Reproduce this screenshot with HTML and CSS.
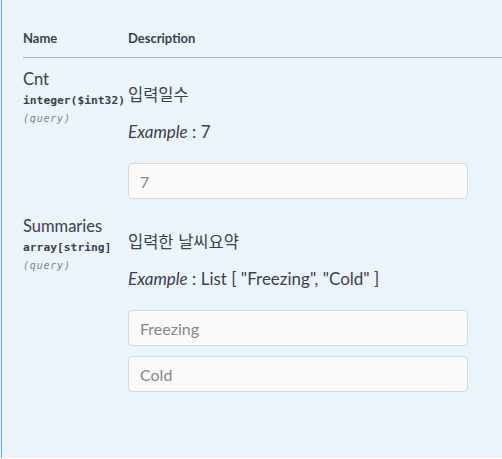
FILE: index.html
```html
<!DOCTYPE html>
<html lang="ko">
<head>
<meta charset="utf-8">
<title>Parameters</title>
<link rel="stylesheet" href="styles.css">
</head>
<body>
<div class="panel">
  <div class="params">
    <div class="head">
      <div class="col-name">Name</div>
      <div class="col-desc">Description</div>
    </div>
    <div class="param">
      <div class="col-name">
        <div class="pname">Cnt</div>
        <div class="ptype">integer($int32)</div>
        <div class="pin">(query)</div>
      </div>
      <div class="col-desc">
        <p class="desc">입력일수</p>
        <p class="example"><i>Example</i> : 7</p>
        <input class="field" type="text" placeholder="7">
      </div>
    </div>
    <div class="param">
      <div class="col-name">
        <div class="pname">Summaries</div>
        <div class="ptype">array[string]</div>
        <div class="pin">(query)</div>
      </div>
      <div class="col-desc">
        <p class="desc">입력한 날씨요약</p>
        <p class="example"><i>Example</i> : List [ "Freezing", "Cold" ]</p>
        <input class="field" type="text" placeholder="Freezing">
        <input class="field" type="text" placeholder="Cold">
      </div>
    </div>
  </div>
</div>
</body>
</html>
```
FILE: styles.css
```css
html {
  background: #ffffff;
}
body {
  margin: 0;
  background: #ebf3fb;
  color: #3b4151;
  font-family: Lato, "Noto Sans CJK KR", sans-serif;
}
.panel {
  margin-left: 1px;
  height: 458px;
  box-sizing: border-box;
  border-left: 1px solid #61affe;
  padding: 30px 0 0 21px;
}
.head {
  display: flex;
  font-size: 13px;
  font-weight: 700;
  line-height: 16px;
  padding-bottom: 11px;
  border-bottom: 1px solid #aeb4bf;
}
.col-name {
  width: 105px;
  flex: none;
}
.col-desc {
  flex: 1;
  display: flex;
  flex-direction: column;
  align-items: flex-start;
}
.param {
  display: flex;
  padding-top: 11px;
}
.pname {
  font-size: 16.5px;
  line-height: 20px;
}
.ptype {
  margin-top: 3px;
  font-family: "DejaVu Sans Mono", monospace;
  font-weight: 700;
  font-size: 11.3px;
  line-height: 18px;
  white-space: nowrap;
}
.pin {
  font-family: "DejaVu Sans Mono", monospace;
  font-style: italic;
  font-size: 10px;
  letter-spacing: 0.8px;
  line-height: 18px;
  color: #858585;
}
.desc {
  margin: 14px 0 0;
  font-family: "Noto Sans CJK KR", sans-serif;
  font-size: 16.5px;
  line-height: 22px;
}
.example {
  margin: 17px 0 0;
  font-size: 17px;
  line-height: 20px;
}
.field {
  box-sizing: border-box;
  width: 340px;
  height: 36px;
  margin: 0;
  padding: 0 11px;
  border: 1px solid #d9d9d9;
  border-radius: 4px;
  background: #fafafa;
  font-family: Lato, sans-serif;
  font-size: 16px;
  color: #3b4151;
  outline: none;
}
.field::placeholder {
  color: #878787;
}
.example + .field {
  margin-top: 21px;
}
.field + .field {
  margin-top: 10px;
}
.col-desc .field:last-child {
  margin-bottom: 6px;
}
```
